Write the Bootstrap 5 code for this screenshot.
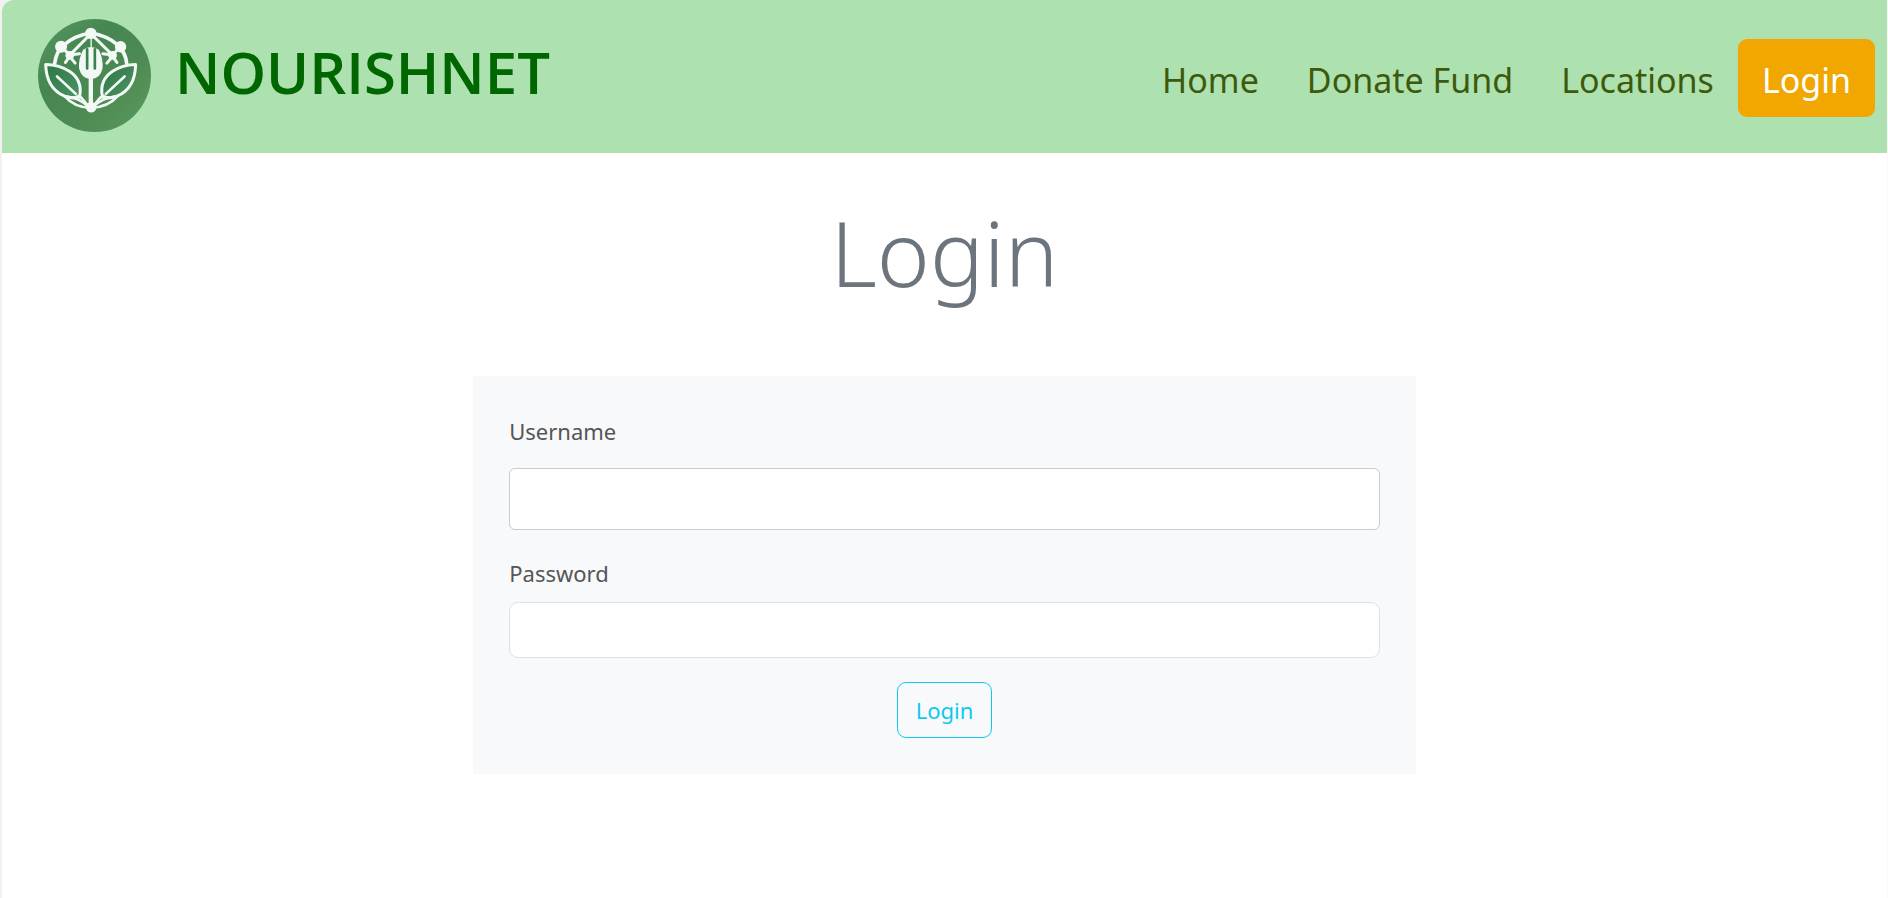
<!DOCTYPE html>
<html lang="en">
<head>
<meta charset="utf-8">
<meta name="viewport" content="width=device-width, initial-scale=1">
<title>NourishNet - Login</title>
<link href="https://cdn.jsdelivr.net/npm/bootstrap@5.3.0/dist/css/bootstrap.min.css" rel="stylesheet">
<style>
  body { font-family: "Noto Sans", "Open Sans", sans-serif; font-size: 22px; background: #f1f1f1; }
  .page-frame { margin-left: 2px; border-right: 1px solid #fafafa; border-top-left-radius: 12px; background: #fff; overflow: hidden; }
  .site-header { background: #ade1af; padding: 19px 12px 21px 36px; }
  .brand-logo { width: 113px; height: 113px; }
  .brand-name { font-family: "Open Sans", "Noto Sans", sans-serif; font-size: 58px; line-height: 72px; font-weight: 600; color: #060; }
  .site-menu .nav-link { font-size: 34px; line-height: 54px; padding: 14px 24px 10px; border-radius: 9px; color: #3d5a0c; }
  .site-menu .nav-link.active { background: #f2a600; color: #fff; }
  .page-title { font-size: 90px; line-height: 115px; font-weight: 300; color: #6c757d; margin: 42px 0 66px; }
  .login-panel { background: #f8f9fb; padding: 36px; }
  .login-panel label { color: #555; line-height: 38px; padding-bottom: 2px; }
  .login-panel .form-control { font-size: 22px; height: 56px; border-color: #dee2e6; border-radius: 9px; }
  .login-panel .user-field { height: 62px; border-color: #ccc; border-radius: 6px; }
  .login-panel .btn { font-size: 22px; line-height: 36px; padding: 9px 18px; border-radius: 9px; }
</style>
</head>
<body>
<div class="page-frame min-vh-100">
  <header class="site-header d-flex align-items-center justify-content-between">
    <a href="#" class="d-flex align-items-center text-decoration-none">
      <svg class="brand-logo flex-shrink-0" viewBox="24 26 338 338" aria-hidden="true">
        <defs>
          <linearGradient id="disc" x1="0" y1="0" x2="1" y2="1">
            <stop offset="0" stop-color="#569660"/><stop offset=".35" stop-color="#468651"/><stop offset=".6" stop-color="#4c8a53"/><stop offset="1" stop-color="#5a995d"/>
          </linearGradient>
          <linearGradient id="leaf" x1="0" y1="0" x2="1" y2="1">
            <stop offset="0" stop-color="#2d7545"/><stop offset="1" stop-color="#4c9563"/>
          </linearGradient>
        </defs>
        <circle cx="193" cy="195" r="169" fill="url(#disc)"/>
        <g fill="none" stroke="#f2f8f4" stroke-linejoin="round" stroke-linecap="round">
          <path d="M74 158Q78 124 101 104Q132 76 182 68Q232 76 263 104Q287 128 289 158" stroke-width="11"/>
          <path d="M95 110L119 134L148 130M218 130L247 134L269 110M119 134L176 76M247 134L188 76M119 138L106 156M119 138L135 158M247 138L230 158M247 138L260 156" stroke-width="9"/>
          <path d="M183 72V116" stroke-width="4"/>
          <path d="M103 256Q133 291 182 292Q234 290 263 256M126 262L152 260L174 286M238 262L211 260L190 286" stroke-width="8"/>
          <path d="M47 162Q89 163 119 183Q157 209 149 255Q132 267 104 257Q49 234 47 162Z" fill="url(#leaf)" stroke-width="9"/>
          <path d="M316 162Q276 163 246 183Q208 209 216 255Q233 267 260 257Q315 234 316 162Z" fill="url(#leaf)" stroke-width="9"/>
          <path d="M81 198L137 250M283 198L227 250M104 257Q150 262 176 290M260 257Q214 262 188 290" stroke-width="8"/>
          <path d="M182 200V286" stroke-width="13"/>
        </g>
        <g fill="#f2f8f4">
          <circle cx="182" cy="69" r="17"/><circle cx="93" cy="109" r="18"/><circle cx="271" cy="109" r="17"/>
          <circle cx="119" cy="135" r="13"/><circle cx="247" cy="135" r="13"/><circle cx="183" cy="290" r="16"/>
          <path d="M159 118Q182 102 206 118Q220 148 217 174Q210 205 182 206Q154 205 147 174Q144 146 159 118Z"/>
        </g>
        <path d="M171 117V174M194 117V174" fill="none" stroke="#39824f" stroke-width="8" stroke-linecap="round"/>
      </svg>
      <span class="brand-name ms-4 pb-2">NOURISHNET</span>
    </a>
    <nav class="site-menu nav pt-1 flex-nowrap">
      <a class="nav-link" href="#">Home</a>
      <a class="nav-link" href="#">Donate Fund</a>
      <a class="nav-link" href="#">Locations</a>
      <a class="nav-link active" href="#" aria-current="page">Login</a>
    </nav>
  </header>
  <main>
    <h1 class="page-title text-center">Login</h1>
    <form class="login-panel w-50 mx-auto">
      <label for="username" class="d-block mb-3">Username</label>
      <input type="text" id="username" class="form-control user-field mb-4">
      <label for="password" class="d-block mb-2">Password</label>
      <input type="password" id="password" class="form-control mb-4">
      <div class="text-center"><button type="button" class="btn btn-outline-info">Login</button></div>
    </form>
  </main>
</div>
<script src="https://cdn.jsdelivr.net/npm/bootstrap@5.3.0/dist/js/bootstrap.bundle.min.js"></script>
</body>
</html>
